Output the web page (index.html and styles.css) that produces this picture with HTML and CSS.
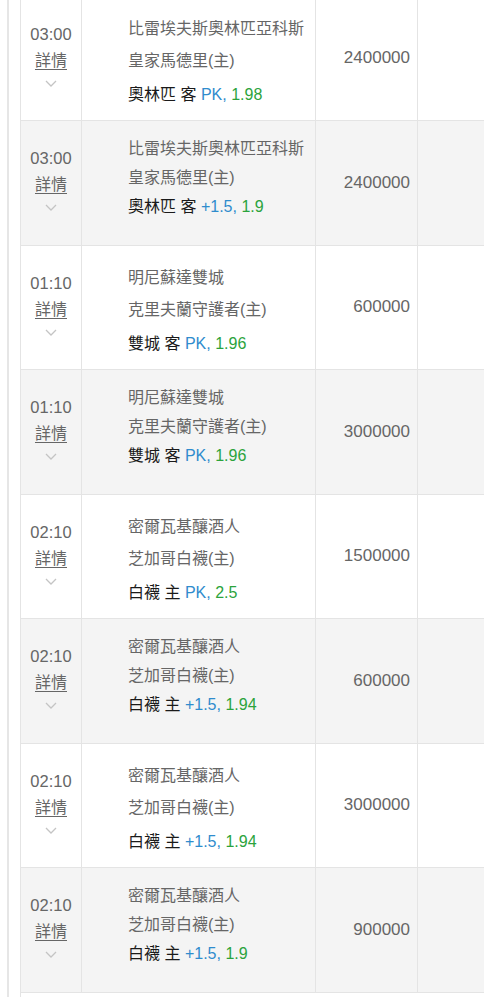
FILE: index.html
```html
<!DOCTYPE html>
<html>
	<head>
		<meta charset="utf-8" />
		<title>投注紀錄</title>
		<link rel="stylesheet" href="styles.css">
	</head>
	<body>
		<div class="frame">
			<div class="list">
				<div class="row">
					<div class="cell time">
						<span class="clock">03:00</span>
						<a class="more" href="#">詳情</a>
						<svg class="chevron" viewBox="0 0 12 7"><path d="M1 1 L6 6 L11 1" /></svg>
					</div>
					<div class="cell match">
						<div class="team">比雷埃夫斯奧林匹亞科斯</div>
						<div class="team">皇家馬德里(主)</div>
						<div class="pick">奧林匹 客 <span class="hcp">PK,</span> <span class="odds">1.98</span></div>
					</div>
					<div class="cell stake">2400000</div>
					<div class="cell extra"></div>
				</div>

				<div class="row alt">
					<div class="cell time">
						<span class="clock">03:00</span>
						<a class="more" href="#">詳情</a>
						<svg class="chevron" viewBox="0 0 12 7"><path d="M1 1 L6 6 L11 1" /></svg>
					</div>
					<div class="cell match">
						<div class="team">比雷埃夫斯奧林匹亞科斯</div>
						<div class="team">皇家馬德里(主)</div>
						<div class="pick">奧林匹 客 <span class="hcp">+1.5,</span> <span class="odds">1.9</span></div>
					</div>
					<div class="cell stake">2400000</div>
					<div class="cell extra"></div>
				</div>

				<div class="row">
					<div class="cell time">
						<span class="clock">01:10</span>
						<a class="more" href="#">詳情</a>
						<svg class="chevron" viewBox="0 0 12 7"><path d="M1 1 L6 6 L11 1" /></svg>
					</div>
					<div class="cell match">
						<div class="team">明尼蘇達雙城</div>
						<div class="team">克里夫蘭守護者(主)</div>
						<div class="pick">雙城 客 <span class="hcp">PK,</span> <span class="odds">1.96</span></div>
					</div>
					<div class="cell stake">600000</div>
					<div class="cell extra"></div>
				</div>

				<div class="row alt">
					<div class="cell time">
						<span class="clock">01:10</span>
						<a class="more" href="#">詳情</a>
						<svg class="chevron" viewBox="0 0 12 7"><path d="M1 1 L6 6 L11 1" /></svg>
					</div>
					<div class="cell match">
						<div class="team">明尼蘇達雙城</div>
						<div class="team">克里夫蘭守護者(主)</div>
						<div class="pick">雙城 客 <span class="hcp">PK,</span> <span class="odds">1.96</span></div>
					</div>
					<div class="cell stake">3000000</div>
					<div class="cell extra"></div>
				</div>

				<div class="row">
					<div class="cell time">
						<span class="clock">02:10</span>
						<a class="more" href="#">詳情</a>
						<svg class="chevron" viewBox="0 0 12 7"><path d="M1 1 L6 6 L11 1" /></svg>
					</div>
					<div class="cell match">
						<div class="team">密爾瓦基釀酒人</div>
						<div class="team">芝加哥白襪(主)</div>
						<div class="pick">白襪 主 <span class="hcp">PK,</span> <span class="odds">2.5</span></div>
					</div>
					<div class="cell stake">1500000</div>
					<div class="cell extra"></div>
				</div>

				<div class="row alt">
					<div class="cell time">
						<span class="clock">02:10</span>
						<a class="more" href="#">詳情</a>
						<svg class="chevron" viewBox="0 0 12 7"><path d="M1 1 L6 6 L11 1" /></svg>
					</div>
					<div class="cell match">
						<div class="team">密爾瓦基釀酒人</div>
						<div class="team">芝加哥白襪(主)</div>
						<div class="pick">白襪 主 <span class="hcp">+1.5,</span> <span class="odds">1.94</span></div>
					</div>
					<div class="cell stake">600000</div>
					<div class="cell extra"></div>
				</div>

				<div class="row">
					<div class="cell time">
						<span class="clock">02:10</span>
						<a class="more" href="#">詳情</a>
						<svg class="chevron" viewBox="0 0 12 7"><path d="M1 1 L6 6 L11 1" /></svg>
					</div>
					<div class="cell match">
						<div class="team">密爾瓦基釀酒人</div>
						<div class="team">芝加哥白襪(主)</div>
						<div class="pick">白襪 主 <span class="hcp">+1.5,</span> <span class="odds">1.94</span></div>
					</div>
					<div class="cell stake">3000000</div>
					<div class="cell extra"></div>
				</div>

				<div class="row alt">
					<div class="cell time">
						<span class="clock">02:10</span>
						<a class="more" href="#">詳情</a>
						<svg class="chevron" viewBox="0 0 12 7"><path d="M1 1 L6 6 L11 1" /></svg>
					</div>
					<div class="cell match">
						<div class="team">密爾瓦基釀酒人</div>
						<div class="team">芝加哥白襪(主)</div>
						<div class="pick">白襪 主 <span class="hcp">+1.5,</span> <span class="odds">1.9</span></div>
					</div>
					<div class="cell stake">900000</div>
					<div class="cell extra"></div>
				</div>

				<div class="row last"></div>
			</div>
		</div>
	</body>
</html>
```

FILE: styles.css
```css
html, body {
	margin: 0;
	padding: 0;
	background-color: #fff;
	overflow: hidden;
}

body {
	font-family: "Liberation Sans", "Noto Sans CJK TC", sans-serif;
	color: #666;
}

.frame {
	margin-left: 7px;
	padding-left: 11px;
	border-left: 2px solid #e6e6e6;
	height: 1000px;
}

.list {
	margin-top: -3.5px;
	width: 560px;
	border-left: 1px solid #e4e4e4;
}

.row {
	display: grid;
	grid-template-columns: 61px 234px 102px 1fr;
	height: 124.5px;
	box-sizing: border-box;
	border-bottom: 1px solid #e4e4e4;
	background-color: #fff;
}

.row.alt {
	background-color: #f4f4f4;
}

.row.last {
	height: 40px;
	border-bottom: none;
}

.cell {
	border-right: 1px solid #e4e4e4;
	box-sizing: border-box;
}

.time {
	display: flex;
	flex-direction: column;
	align-items: center;
	padding-top: 27px;
}

.clock {
	font-size: 16.5px;
	line-height: 20px;
	color: #666;
}

.more {
	font-size: 16px;
	line-height: 28px;
	margin-top: 3px;
	color: #666;
	text-decoration: underline;
	text-underline-offset: 3px;
}

.chevron {
	width: 12px;
	height: 7px;
	margin-top: 5px;
	fill: none;
	stroke: #c4c4c4;
	stroke-width: 1.3;
}

.match {
	padding: 16px 0 0 46px;
}

.team {
	font-size: 16px;
	line-height: 32.5px;
	color: #666;
	white-space: nowrap;
}

.pick {
	font-size: 16px;
	line-height: 33px;
	color: #1a1a1a;
	white-space: nowrap;
}

.alt .match {
	padding-top: 12.5px;
}

.alt .team,
.alt .pick {
	line-height: 29px;
}

.hcp {
	color: #2f8ccd;
}

.odds {
	color: #2ba33c;
}

.stake {
	display: flex;
	align-items: center;
	justify-content: flex-end;
	padding-right: 7px;
	font-size: 17px;
	color: #666;
}
```
